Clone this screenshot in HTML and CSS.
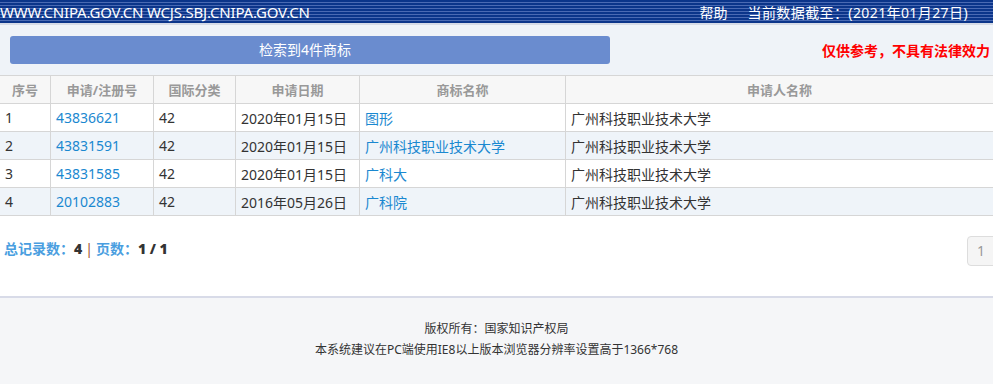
FILE: index.html
```html
<!DOCTYPE html>
<html lang="zh-CN">
<head>
    <meta charset="UTF-8">
    <title>商标检索结果</title>
    <link rel="stylesheet" href="styles.css">
</head>
<body>
    <header class="topbar">
        <span class="site">WWW.CNIPA.GOV.CN WCJS.SBJ.CNIPA.GOV.CN</span>
        <span class="help">帮助</span>
        <span class="date">当前数据截至：(2021年01月27日)</span>
    </header>

    <div class="toolbar">
        <div class="count">检索到4件商标</div>
        <div class="notice">仅供参考，不具有法律效力</div>
    </div>

    <table class="result">
        <thead>
            <tr>
                <th class="c-no">序号</th>
                <th class="c-reg">申请/注册号</th>
                <th class="c-cls">国际分类</th>
                <th class="c-date">申请日期</th>
                <th class="c-name">商标名称</th>
                <th>申请人名称</th>
            </tr>
        </thead>
        <tbody>
            <tr>
                <td>1</td>
                <td><a href="#">43836621</a></td>
                <td>42</td>
                <td>2020年01月15日</td>
                <td><a href="#">图形</a></td>
                <td>广州科技职业技术大学</td>
            </tr>
            <tr>
                <td>2</td>
                <td><a href="#">43831591</a></td>
                <td>42</td>
                <td>2020年01月15日</td>
                <td><a href="#">广州科技职业技术大学</a></td>
                <td>广州科技职业技术大学</td>
            </tr>
            <tr>
                <td>3</td>
                <td><a href="#">43831585</a></td>
                <td>42</td>
                <td>2020年01月15日</td>
                <td><a href="#">广科大</a></td>
                <td>广州科技职业技术大学</td>
            </tr>
            <tr>
                <td>4</td>
                <td><a href="#">20102883</a></td>
                <td>42</td>
                <td>2016年05月26日</td>
                <td><a href="#">广科院</a></td>
                <td>广州科技职业技术大学</td>
            </tr>
        </tbody>
    </table>

    <div class="pager">
        <div class="stats">
            <span class="lbl">总记录数：</span><b>4</b><span class="sep">|</span><span class="lbl">页数：</span><b>1 / 1</b>
        </div>
        <a class="page" href="#">1</a>
    </div>

    <footer class="foot">
        <p>版权所有：国家知识产权局</p>
        <p>本系统建议在PC端使用IE8以上版本浏览器分辨率设置高于1366*768</p>
    </footer>
</body>
</html>
```

FILE: styles.css
```css
body {
    margin: 0;
    font-family: "Noto Sans", "Noto Sans CJK SC", sans-serif;
    font-size: 14px;
    color: #333;
    background-color: #fff;
}
a {
    color: #1a88d0;
    text-decoration: none;
}

.topbar {
    display: flex;
    align-items: center;
    height: 23px;
    padding: 0 25px 0 0;
    color: #fff;
    background-color: #0b358a;
    background-image: repeating-linear-gradient(to bottom, #0b358a 0, #0b358a 2px, #4a6ab3 2px, #4a6ab3 3px);
    border-bottom: 2px solid #d6dbe6;
    white-space: nowrap;
}
.topbar .site {
    font-size: 15px;
    letter-spacing: -0.2px;
}
.topbar .help {
    margin-left: auto;
    margin-right: 20px;
}
.topbar .date {
    letter-spacing: 0.4px;
}

.toolbar {
    display: flex;
    align-items: center;
    justify-content: space-between;
    padding: 11px 3px 11px 10px;
    background-color: #eff3f8;
}
.count {
    width: 590px;
    height: 28px;
    line-height: 28px;
    padding-right: 10px;
    text-align: center;
    color: #fff;
    background-color: #6a8ccf;
    border-radius: 3px;
}
.notice {
    color: #f00;
    font-weight: bold;
}

.result {
    width: 100%;
    border-collapse: collapse;
}
.result th, .result td {
    height: 27px;
    padding: 0 5px;
    border: 1px solid #d6d6d6;
    white-space: nowrap;
}
.result tr > :first-child {
    border-left: none;
}
.result tr > :last-child {
    border-right: none;
}
.result th {
    color: #999;
    font-size: 13px;
    font-weight: bold;
    background-color: #f7f7f7;
}
.result td {
    text-align: left;
}
.result tbody tr:nth-child(even) {
    background-color: #eff4f9;
}
.c-no { width: 40px; }
.c-reg { width: 92px; }
.c-cls { width: 71px; }
.c-date { width: 113px; }
.c-name { width: 195px; }

.pager {
    display: flex;
    align-items: flex-start;
    justify-content: space-between;
    height: 60px;
    padding: 20px 0 0 4px;
    border-bottom: 2px solid #d8dbe8;
}
.stats {
    padding-top: 2px;
    font-weight: bold;
}
.stats .lbl {
    color: #4a9ee0;
}
.stats .sep {
    margin: 0 3px;
    color: #a0522d;
    font-weight: normal;
}
.page {
    margin-right: -10px;
    width: 36px;
    height: 30px;
    line-height: 28px;
    padding-right: 8px;
    text-align: center;
    color: #999;
    background-color: #f5f5f5;
    border: 1px solid #ddd;
    border-radius: 4px;
    box-sizing: border-box;
}

.foot {
    padding: 20px 0 30px;
    text-align: center;
    font-size: 12px;
    background-color: #f5f6f8;
}
.foot p {
    margin: 0;
    line-height: 21px;
}
```
